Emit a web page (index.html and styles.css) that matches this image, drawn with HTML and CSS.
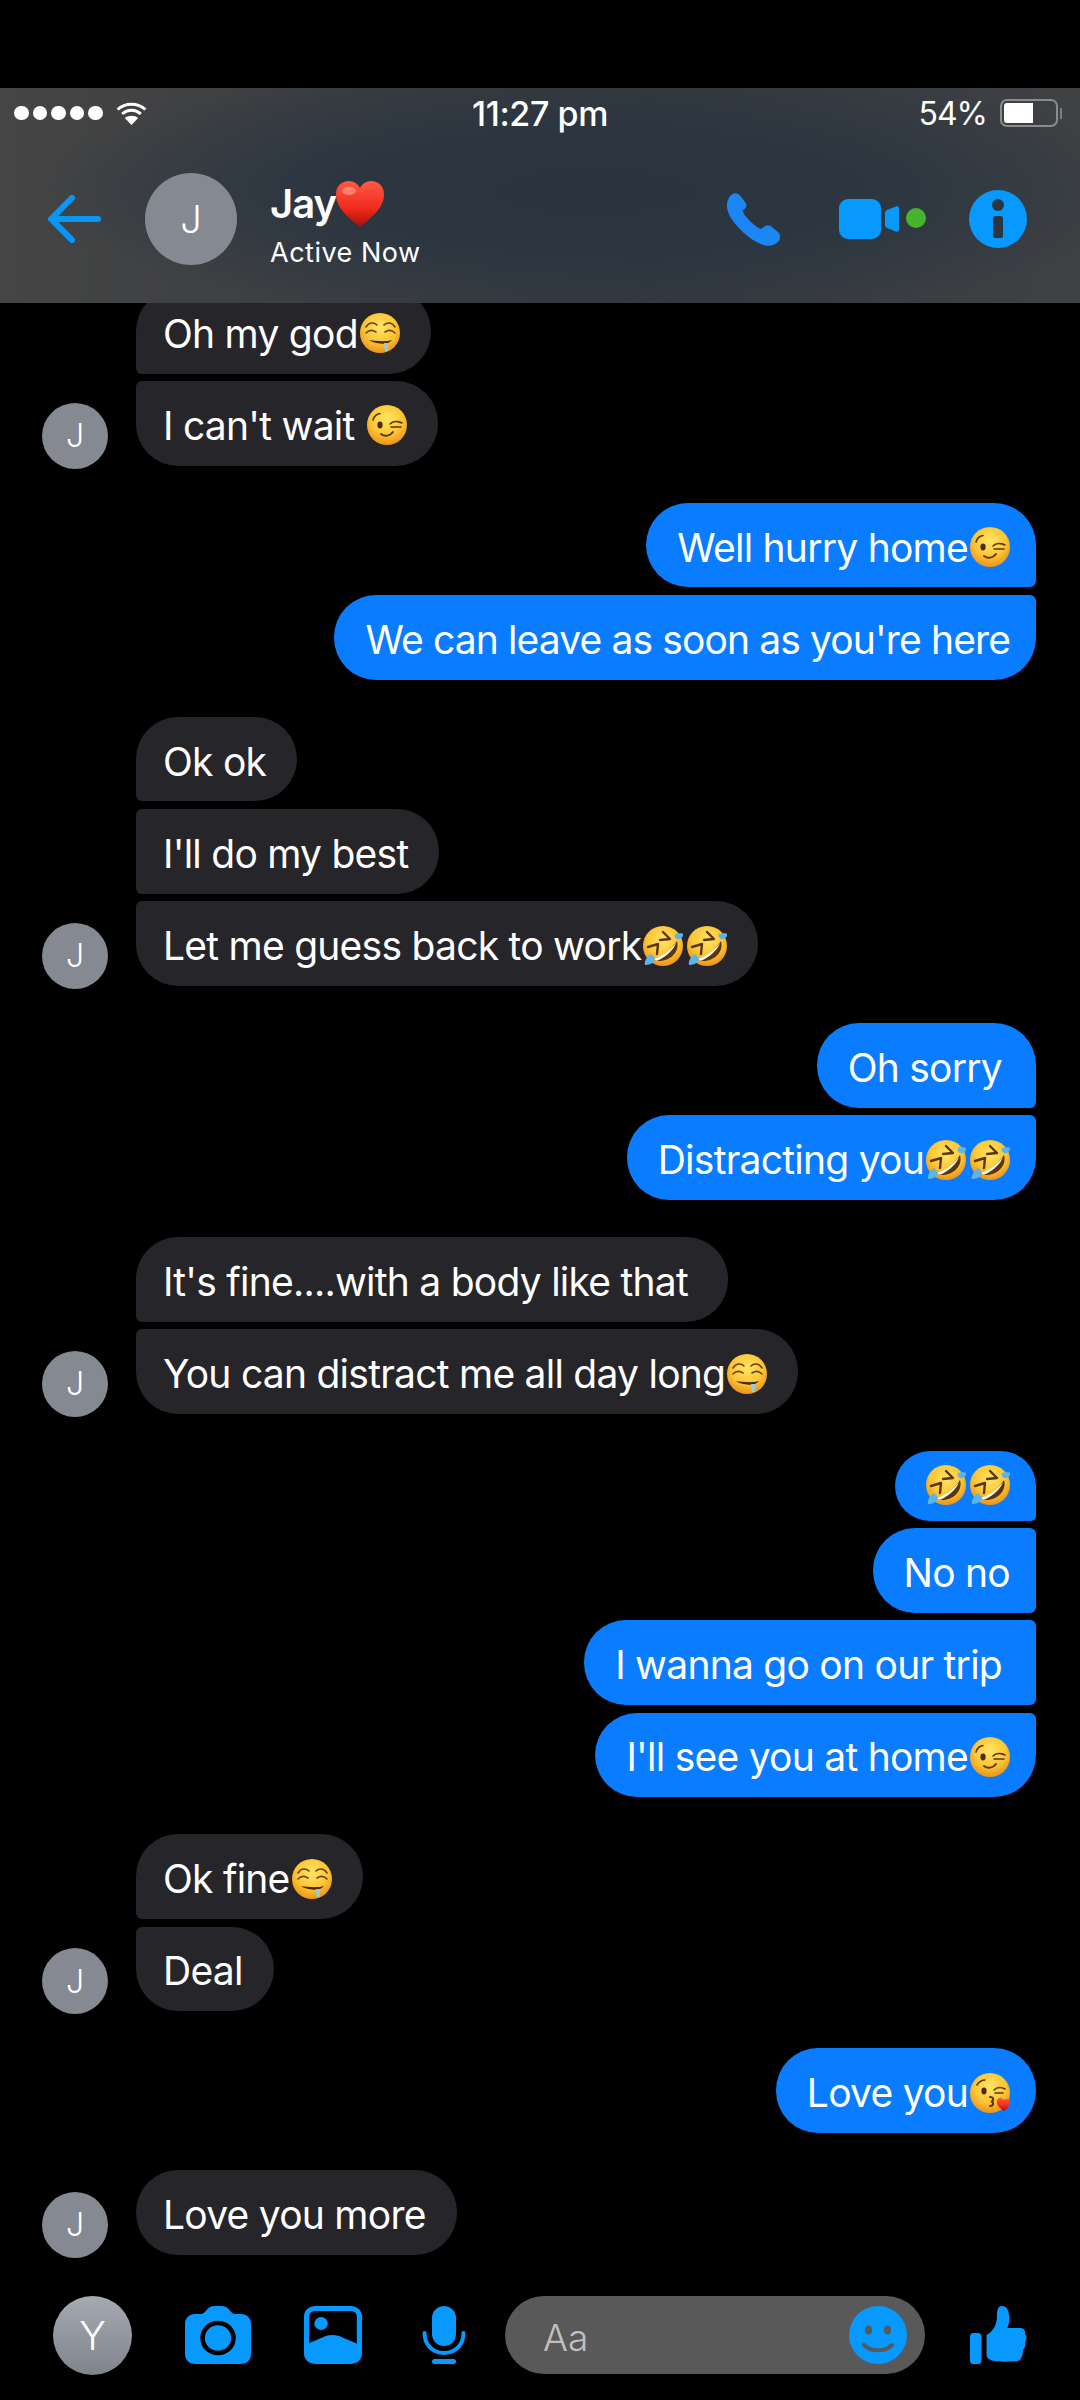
FILE: index.html
```html
<!DOCTYPE html>
<html lang="en">
<head>
    <meta charset="UTF-8">
    <meta name="viewport" content="width=device-width, initial-scale=1.0">
    <title>Jay - Chat</title>
    <link rel="stylesheet" href="styles.css">
</head>
<body>

<!-- shared emoji drawings -->
<svg class="defs" aria-hidden="true">
    <defs>
        <radialGradient id="face" cx="50%" cy="35%" r="70%">
            <stop offset="0" stop-color="#ffe566"/>
            <stop offset="0.55" stop-color="#fcc636"/>
            <stop offset="1" stop-color="#e88a16"/>
        </radialGradient>
        <linearGradient id="red" x1="0" y1="0" x2="0" y2="1">
            <stop offset="0" stop-color="#ff5a45"/>
            <stop offset="0.6" stop-color="#f02a1c"/>
            <stop offset="1" stop-color="#a90f0a"/>
        </linearGradient>
        <symbol id="wink" viewBox="0 0 40 40">
            <circle cx="20" cy="20" r="20" fill="url(#face)"/>
            <ellipse cx="13" cy="20" rx="2.6" ry="3.4" fill="#4a2a10"/>
            <path d="M6 15C7 11 10 9 13 8.5M23 19C26 16 31 16 35 18M24 22H34" fill="none" stroke="#5b3512" stroke-width="1.6" stroke-linecap="round"/>
            <path d="M14 29C18 32 23 31 26 27" fill="none" stroke="#5b3512" stroke-width="2" stroke-linecap="round"/>
        </symbol>
        <symbol id="drool" viewBox="0 0 40 40">
            <circle cx="20" cy="20" r="20" fill="url(#face)"/>
            <path d="M6 14C9 9 14 9 17 12M24 12C27 9 32 9 35 14M6 20C9 17 13 17 16 19M25 19C28 17 32 17 35 20" fill="none" stroke="#6b4214" stroke-width="1.6" stroke-linecap="round"/>
            <path d="M9 27C15 28 26 29 32 27C29 31 24 31 20 30.500C15 30 11 29 9 27Z" fill="#4a2a10"/>
            <path d="M24 30H28L27.600 38H25Z" fill="#8fd0e6"/>
        </symbol>
        <symbol id="rofl" viewBox="0 0 40 40">
            <circle cx="20" cy="20" r="20" fill="url(#face)"/>
            <path d="M20 6L27 13L17 14M5 21L15 18L14 28" fill="none" stroke="#5b3512" stroke-width="2.4" stroke-linecap="round" stroke-linejoin="round"/>
            <path d="M34 15C37 25 28 36 14 35C20 30 28 24 34 15Z" fill="#5b3512"/>
            <path d="M33 17C31 23 24 30 16 34C13 34.5 12 34 11 33C20 30 28 24 33 17Z" fill="#fff"/>
            <path d="M32 8C35 7 38 7 41 8C40 11 37 14 34 13C32 12 31 10 32 8Z" fill="#5db4e6"/>
            <path d="M8 28C10 30 12 32 12 34C10 38 5 39 2 39C1 36 3 31 8 28Z" fill="#5db4e6"/>
        </symbol>
        <symbol id="kiss" viewBox="0 0 40 40">
            <circle cx="20" cy="20" r="20" fill="url(#face)"/>
            <ellipse cx="14" cy="18" rx="2.6" ry="3.4" fill="#4a2a10"/>
            <path d="M7 12C9 9 12 7 15 7M24 17C27 14 31 14 35 16M25 20H33" fill="none" stroke="#5b3512" stroke-width="1.6" stroke-linecap="round"/>
            <path d="M20 24C24 24 24 28 21 28.500C24 29 24 33 20 33" fill="none" stroke="#5b3512" stroke-width="2" stroke-linecap="round"/>
            <path d="M34 38C29 35 26 31 27 27.500C28 24 32 24 33.500 27C36 25 40 26 40 30C40 33 37 36 34 38Z" fill="url(#red)"/>
        </symbol>
        <symbol id="heart" viewBox="0 0 48 46">
            <path d="M24 46C12 36 0 27 0 13C0 5 6 0 13 0C18 0 22 3 24 7C26 3 30 0 35 0C42 0 48 5 48 13C48 27 36 36 24 46Z" fill="url(#red)"/>
            <ellipse cx="13" cy="10" rx="7" ry="4" fill="#ff9a88" opacity="0.7"/>
        </symbol>
    </defs>
</svg>

<div class="top-band"></div>

<header class="chat-header">
    <div class="status-bar">
        <div class="status-left">
            <span class="signal"><i></i><i></i><i></i><i></i><i></i></span>
            <svg class="wifi" viewBox="0 0 30 24" preserveAspectRatio="none">
                <path d="M1.500 8.500C9 1.500 21 1.500 28.500 8.500M6 13C11.500 8 18.500 8 24 13" fill="none" stroke="#fff" stroke-width="3"/>
                <path d="M15 24L8.500 17C12 14 18 14 21.500 17Z" fill="#fff"/>
            </svg>
        </div>
        <div class="status-time">11:27 pm</div>
        <div class="status-right">
            <span>54%</span>
            <span class="battery"><span class="battery-fill"></span></span>
            <span class="battery-nub"></span>
        </div>
    </div>
    <div class="title-bar">
        <svg class="back" viewBox="0 0 51 48" preserveAspectRatio="none">
            <path d="M23 3L3 24L23 45M3 24H48" fill="none" stroke="#0a96f5" stroke-width="6" stroke-linecap="round" stroke-linejoin="round"/>
        </svg>
        <div class="avatar avatar-large">J</div>
        <div class="title-text">
            <div class="title-name">Jay<svg class="emoji-heart"><use href="#heart"/></svg></div>
            <div class="title-status">Active Now</div>
        </div>
        <div class="title-actions">
            <svg class="icon-phone" viewBox="0 0 51 53" preserveAspectRatio="none">
                <path d="M4 2C7-1 11 0 13 3L18 10C19 12 19 14 17 16L15 18C17 24 27 34 33 36L36 33.500C38 32 40 32 42 33L49 39C52 42 52 46 49 49C46 52 42 53.500 37 52.500C24 50 2 29 0 15C-.5 10 1 5 4 2Z" fill="#1c86f5"/>
            </svg>
            <svg class="icon-video" viewBox="0 0 87 40">
                <rect x="0" y="0" width="42" height="40" rx="9" fill="#0899ff"/>
                <path d="M46 14C46 12.500 47 11.500 48 11L57 7.500C58.500 7 60 7.500 60 9.500V30.500C60 32.500 58.500 33 57 32.500L48 29C47 28.500 46 27.500 46 26Z" fill="#0899ff"/>
                <circle cx="77" cy="19" r="10" fill="#45b52f"/>
            </svg>
            <svg class="icon-info" viewBox="0 0 58 58">
                <circle cx="29" cy="29" r="29" fill="#0899ff"/>
                <circle cx="29" cy="15" r="6" fill="#2b3643"/>
                <rect x="24" y="26" width="10" height="22" rx="2.500" fill="#2b3643"/>
            </svg>
        </div>
    </div>
</header>

<main class="messages">
    <div class="messages-inner">
        <div class="group">
            <div class="avatar avatar-small">J</div>
            <div class="bubbles">
                <div class="bubble">Oh my god<svg class="emoji"><use href="#drool"/></svg></div>
                <div class="bubble">I can't wait <svg class="emoji"><use href="#wink"/></svg></div>
            </div>
        </div>

        <div class="group mine">
            <div class="bubbles">
                <div class="bubble">Well hurry home<svg class="emoji"><use href="#wink"/></svg></div>
                <div class="bubble tight">We can leave as soon as you're here</div>
            </div>
        </div>

        <div class="group">
            <div class="avatar avatar-small">J</div>
            <div class="bubbles">
                <div class="bubble">Ok ok</div>
                <div class="bubble">I'll do my best</div>
                <div class="bubble">Let me guess back to work<svg class="emoji"><use href="#rofl"/></svg><svg class="emoji"><use href="#rofl"/></svg></div>
            </div>
        </div>

        <div class="group mine">
            <div class="bubbles">
                <div class="bubble trailing">Oh sorry</div>
                <div class="bubble">Distracting you<svg class="emoji"><use href="#rofl"/></svg><svg class="emoji"><use href="#rofl"/></svg></div>
            </div>
        </div>

        <div class="group">
            <div class="avatar avatar-small">J</div>
            <div class="bubbles">
                <div class="bubble trailing">It's fine....with a body like that</div>
                <div class="bubble">You can distract me all day long<svg class="emoji"><use href="#drool"/></svg></div>
            </div>
        </div>

        <div class="group mine">
            <div class="bubbles">
                <div class="bubble bubble-emoji"><svg class="emoji"><use href="#rofl"/></svg><svg class="emoji"><use href="#rofl"/></svg></div>
                <div class="bubble">No no</div>
                <div class="bubble trailing">I wanna go on our trip</div>
                <div class="bubble">I'll see you at home<svg class="emoji"><use href="#wink"/></svg></div>
            </div>
        </div>

        <div class="group">
            <div class="avatar avatar-small">J</div>
            <div class="bubbles">
                <div class="bubble">Ok fine<svg class="emoji"><use href="#drool"/></svg></div>
                <div class="bubble">Deal</div>
            </div>
        </div>

        <div class="group mine">
            <div class="bubbles">
                <div class="bubble">Love you<svg class="emoji"><use href="#kiss"/></svg></div>
            </div>
        </div>

        <div class="group">
            <div class="avatar avatar-small">J</div>
            <div class="bubbles">
                <div class="bubble">Love you more</div>
            </div>
        </div>
    </div>
</main>

<footer class="composer">
    <div class="avatar avatar-me">Y</div>
    <svg class="icon-camera" viewBox="0 0 64 58" preserveAspectRatio="none">
        <path d="M10 8H15C18 8 19 6 21 4C23 1.500 25 0 29 0H35C39 0 41 1.500 43 4C45 6 46 8 49 8H54C60 8 64 12 64 18V48C64 54 60 58 54 58H10C4 58 0 54 0 48V18C0 12 4 8 10 8Z" fill="#0899ff"/>
        <circle cx="32" cy="32" r="15" fill="none" stroke="#000" stroke-width="4.500"/>
    </svg>
    <svg class="icon-image" viewBox="0 0 56 58" preserveAspectRatio="none">
        <rect x="2.500" y="2.500" width="51" height="53" rx="8" fill="none" stroke="#0899ff" stroke-width="5"/>
        <circle cx="16.500" cy="17.500" r="6.500" fill="#0899ff"/>
        <path d="M3 38L21 30C25 28.500 30 28.500 34 30L53 38.500V50C53 54 50 56 47 56H9C6 56 3 54 3 50Z" fill="#0899ff"/>
    </svg>
    <svg class="icon-mic" viewBox="0 0 44 58">
        <rect x="10" y="0" width="24" height="40" rx="12" fill="#0899ff"/>
        <path d="M2.500 27C2.500 38 10 47 22 47C34 47 41.500 38 41.500 27" fill="none" stroke="#0899ff" stroke-width="4" stroke-linecap="round"/>
        <rect x="10" y="53" width="24" height="5" rx="2.500" fill="#0899ff"/>
    </svg>
    <div class="input">
        <span class="input-hint">Aa</span>
        <svg class="icon-smile" viewBox="0 0 58 58">
            <circle cx="29" cy="29" r="29" fill="#0899ff"/>
            <ellipse cx="19.500" cy="24" rx="3.500" ry="4.500" fill="#595959"/>
            <ellipse cx="38.500" cy="24" rx="3.500" ry="4.500" fill="#595959"/>
            <path d="M15 39C22 46 36 46 43 39" fill="none" stroke="#595959" stroke-width="4" stroke-linecap="round"/>
        </svg>
    </div>
    <svg class="icon-thumb" viewBox="0 0 55 58" preserveAspectRatio="none">
        <rect x="0" y="27" width="11" height="31" rx="3.500" fill="#0899ff"/>
        <path d="M16 29C23 25 26 18 26 10C26 4 27 0 31 0C36 0 38 6 38 13C38 17 37 20 36 22H48C52 22 54 25 53 28C55 30 55 34 53 36C54 39 53 42 51 44C51 48 50 54 46 55C40 56 24 56 20 54C17 53 16 51 16 48Z" fill="#0899ff"/>
    </svg>
</footer>

</body>
</html>
```

FILE: styles.css
```css
html, body {
    margin: 0;
    padding: 0;
    background-color: #000;
}

body {
    width: 1080px;
    height: 2400px;
    display: flex;
    flex-direction: column;
    overflow: hidden;
    font-family: Inter, "Liberation Sans", sans-serif;
    color: #fff;
}

.defs {
    position: absolute;
    width: 0;
    height: 0;
}

.top-band {
    height: 88px;
    flex: none;
}

/* header */
.chat-header {
    height: 215px;
    flex: none;
    background:
        radial-gradient(ellipse 560px 130px at 55% 48%, #29343f 0%, #2b3641 45%, rgba(45, 54, 64, 0) 100%),
        linear-gradient(90deg, #454545 0%, #3c3e41 30%, #34383e 60%, #3f4143 100%);
}

.status-bar {
    height: 55px;
    box-sizing: border-box;
    padding: 0 18px 5px 14px;
    display: grid;
    grid-template-columns: 1fr auto 1fr;
    align-items: center;
}

.status-left {
    display: flex;
    align-items: center;
    gap: 13px;
}

.signal {
    display: flex;
    gap: 4px;
}

.signal i {
    width: 14.5px;
    height: 14.5px;
    border-radius: 50%;
    background-color: #fff;
}

.wifi {
    width: 31px;
    height: 24px;
}

.status-time {
    margin-left: 4px;
    font-size: 34px;
    font-weight: 500;
    letter-spacing: -0.4px;
}

.status-right {
    display: flex;
    align-items: center;
    justify-content: flex-end;
    font-size: 32px;
    letter-spacing: -1px;
}

.battery {
    width: 58px;
    height: 28px;
    margin-left: 13px;
    padding: 2px;
    box-sizing: border-box;
    border: 2px solid #8a8b8d;
    border-radius: 7px;
    display: flex;
}

.battery-fill {
    width: 29px;
    background-color: #fff;
    border-radius: 3px 0 0 3px;
}

.battery-nub {
    width: 2px;
    height: 11px;
    margin-left: 2px;
    background-color: #7d7e80;
}

.title-bar {
    height: 152px;
    display: flex;
    align-items: center;
    padding: 0 53px 0 48px;
}

.back {
    width: 53px;
    height: 48px;
    flex: none;
}

.avatar {
    border-radius: 50%;
    background-color: #858992;
    display: flex;
    align-items: center;
    justify-content: center;
    flex: none;
    font-weight: 300;
}

.avatar-large {
    width: 92px;
    height: 92px;
    margin-left: 44px;
    font-size: 38px;
}

.title-text {
    margin: 10px 0 0 33px;
}

.title-name {
    font-size: 40px;
    font-weight: 600;
    line-height: 50px;
    letter-spacing: -1px;
    display: flex;
    align-items: center;
}

.emoji-heart {
    width: 48px;
    height: 46px;
}

.title-status {
    margin-top: 7px;
    font-size: 27px;
    line-height: 34px;
    letter-spacing: 0.5px;
}

.title-actions {
    margin-left: auto;
    display: flex;
    align-items: center;
}

.icon-phone {
    width: 53px;
    height: 53px;
}

.icon-video {
    width: 87px;
    height: 40px;
    margin-left: 59px;
}

.icon-info {
    width: 58px;
    height: 58px;
    margin-left: 43px;
}

/* messages */
.messages {
    flex: 1;
    overflow: hidden;
}

.messages-inner {
    margin-top: -14px;
    padding: 0 44px 0 42px;
    display: flex;
    flex-direction: column;
    gap: 37.3px;
}

.group {
    display: flex;
    gap: 28px;
}

.group.mine {
    justify-content: flex-end;
}

.avatar-small {
    width: 66px;
    height: 66px;
    align-self: flex-end;
    margin-bottom: -3px;
    font-size: 32px;
}

.bubbles {
    display: flex;
    flex-direction: column;
    align-items: flex-start;
    gap: 7.7px;
}

.mine .bubbles {
    align-items: flex-end;
}

.bubble {
    font-size: 39px;
    line-height: 46px;
    letter-spacing: -0.75px;
    padding: 21.75px 31px 16.75px 27px;
    border-radius: 42px;
    background-color: #26252a;
    white-space: nowrap;
}

.bubble.tight {
    letter-spacing: -0.88px;
}

.bubble.trailing {
    padding-right: 40px;
}

.mine .bubble {
    padding: 21.75px 26px 16.75px 31px;
    background-color: #0a7cff;
}

.group:not(.mine) .bubble:not(:first-child) {
    border-top-left-radius: 6px;
}

.group:not(.mine) .bubble:not(:last-child) {
    border-bottom-left-radius: 6px;
}

.mine .bubble:not(:first-child) {
    border-top-right-radius: 6px;
}

.mine .bubble:not(:last-child) {
    border-bottom-right-radius: 6px;
}

.mine .bubble-emoji {
    padding-top: 14px;
    padding-bottom: 15.5px;
    height: 40px;
    display: flex;
    align-items: center;
}

.mine .bubble.trailing {
    padding-right: 34px;
}

.emoji {
    width: 40px;
    height: 40px;
    margin: 0 2px;
    vertical-align: -5.5px;
}

.emoji:last-child {
    margin-right: 0;
}

.bubble-emoji .emoji:first-child {
    margin-left: 0;
}

/* composer */
.composer {
    height: 104px;
    flex: none;
    box-sizing: border-box;
    padding: 0 0 26px 53px;
    display: flex;
    align-items: center;
}

.avatar-me {
    width: 79px;
    height: 79px;
    font-size: 40px;
    background: linear-gradient(180deg, #a6aab3, #7f838b);
}

.icon-camera {
    width: 66px;
    height: 58px;
    margin-left: 53px;
}

.icon-image {
    width: 58px;
    height: 58px;
    margin-left: 53px;
}

.icon-mic {
    width: 44px;
    height: 58px;
    margin-left: 60px;
}

.input {
    width: 420px;
    height: 78px;
    margin-left: 39px;
    padding: 0 18px 0 38px;
    box-sizing: border-box;
    border-radius: 39px;
    background-color: #595959;
    display: flex;
    align-items: center;
    justify-content: space-between;
}

.input-hint {
    padding-top: 4px;
    font-size: 37px;
    font-weight: 300;
    color: #c0c0c0;
}

.icon-smile {
    width: 58px;
    height: 58px;
}

.icon-thumb {
    width: 57px;
    height: 58px;
    margin-left: 45px;
}
```
